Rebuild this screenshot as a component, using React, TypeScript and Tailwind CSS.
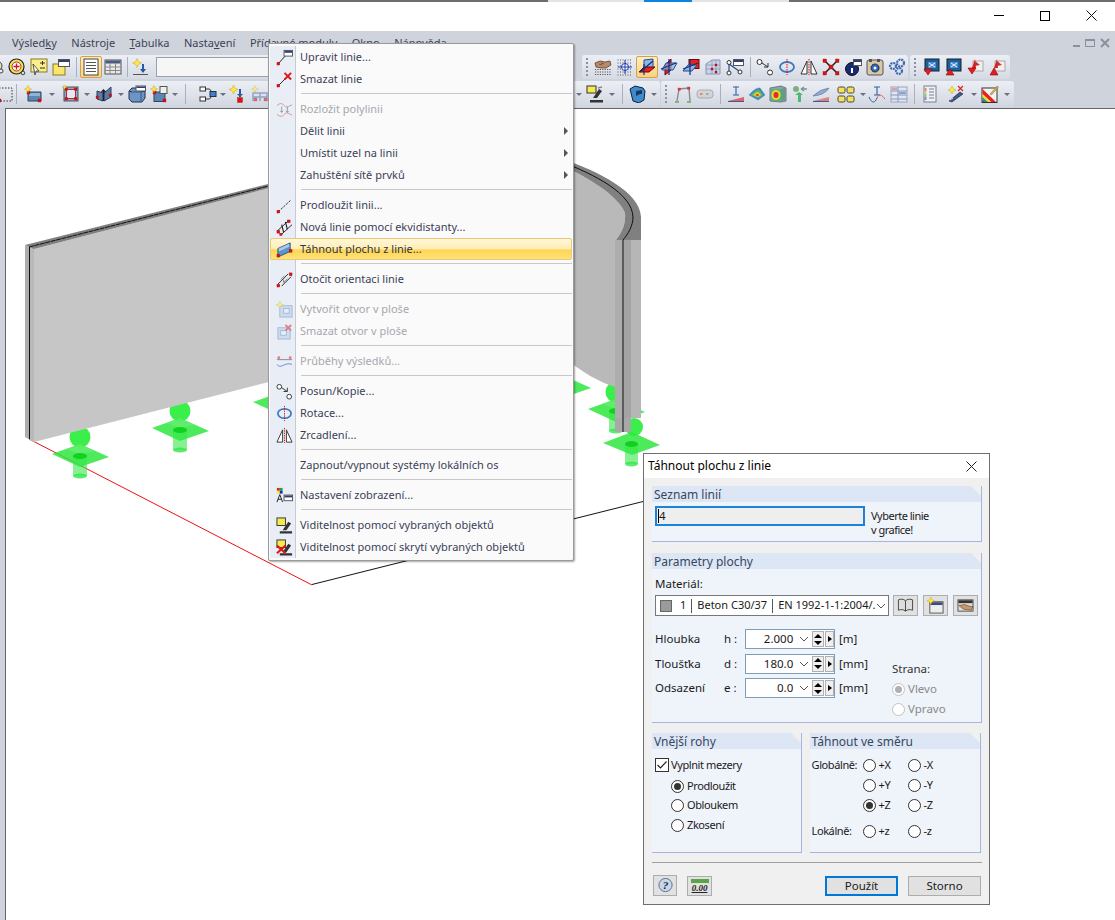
import React from "react";

type P = { children?: React.ReactNode; s?: number; o?: number };
const Svg = ({ children, s = 18, o = 1 }: P) => (
  <svg width={s} height={s} viewBox="0 0 18 18" style={{ opacity: o }} className="shrink-0" fill="none">
    {children}
  </svg>
);
const Rd = ({ x, y, w = 3 }: { x: number; y: number; w?: number }) => <rect x={x} y={y} width={w} height={w} fill="#e01010" stroke="#800" strokeWidth="0.3" />;
const Star = ({ x = 3, y = 3, r = 3.5 }: { x?: number; y?: number; r?: number }) => (
  <polygon points={`${x},${y - r} ${x + r * 0.3},${y - r * 0.3} ${x + r},${y} ${x + r * 0.3},${y + r * 0.3} ${x},${y + r} ${x - r * 0.3},${y + r * 0.3} ${x - r},${y} ${x - r * 0.3},${y - r * 0.3}`} fill="#ffe93a" stroke="#b89a10" strokeWidth="0.4" />
);
const Win = ({ x, y, w = 9, h = 7, f = "#fff" }: { x: number; y: number; w?: number; h?: number; f?: string }) => (
  <g>
    <rect x={x + 0.5} y={y + 0.5} width={w} height={h} fill={f} stroke="#555" />
    <rect x={x + 1} y={y + 1} width={w - 1} height={2} fill="#2c3f78" />
  </g>
);

const I: Record<string, React.ReactNode> = {
  partial: <g><circle cx="9" cy="10" r="5" fill="#e8e2b0" stroke="#444" /><circle cx="13" cy="15" r="2" fill="#eee" stroke="#444" /></g>,
  target: <g><circle cx="8.500" cy="8.500" r="7.500" fill="#f6e14a" stroke="#222" strokeWidth="1.200" /><circle cx="8.500" cy="8.500" r="4.500" fill="#fff" stroke="#a33" /><path d="M5.500 8.500h6M8.500 5.500v6" stroke="#d11" strokeWidth="1.300" /><circle cx="15" cy="15" r="1.800" fill="#ddd" stroke="#444" /></g>,
  cursorStar: <g><rect x="1" y="1" width="16" height="13" fill="#f9ee8a" stroke="#8a7a20" /><path d="M3 6l6 7-3 0-1 4z" fill="#fff" stroke="#333" strokeWidth="0.800" /><path d="M10 5h5M12.500 3v4M10 10h5" stroke="#333" /></g>,
  winYellow: <g><rect x="1" y="6" width="12" height="11" fill="#fbe56a" stroke="#8a7a20" /><Win x={6} y={1} w={11} h={7} /></g>,
  doc: <g><rect x="2" y="1" width="14" height="16" fill="#fff" stroke="#444" /><path d="M4 4.500h10M4 7.500h10M4 10.500h10M4 13.500h10" stroke="#555" /></g>,
  table: <g><rect x="1" y="2" width="16" height="14" fill="#e8e8e8" stroke="#555" /><rect x="1.500" y="2.500" width="15" height="3" fill="#4a5a80" /><path d="M1 9h16M1 12.500h16M6 5v11M11.500 5v11" stroke="#888" /></g>,
  starArrow: <g><Star x={5} y={5} r={4.500} /><path d="M11 6v8" stroke="#2a5a9a" strokeWidth="2" /><path d="M8 11h6l-3 4z" fill="#2a5a9a" /><path d="M1 16.500h15" stroke="#555" /></g>,
  dashed: <g><rect x="2" y="3" width="13" height="13" stroke="#333" strokeDasharray="1.500 1.500" /><Rd x={1} y={14} /></g>,
  starBox: <g><path d="M4 7h13v9H4z" fill="#5b86b8" stroke="#345" /><path d="M5 8h11v3H5z" fill="#8fb4dc" /><Rd x={3} y={6} /><Rd x={14} y={14} /><Star x={4} y={4} r={3.500} /></g>,
  redFrame: <g><rect x="2" y="2" width="14" height="14" fill="#8fa5c4" stroke="#456" /><rect x="4.500" y="4.500" width="9" height="9" fill="#e4e8f0" stroke="#c22" /><Rd x={3} y={3} w={2.500} /><Rd x={12.500} y={3} w={2.500} /><Rd x={3} y={12.500} w={2.500} /><Rd x={12.500} y={12.500} w={2.500} /><Star x={2.500} y={2} r={2.500} /></g>,
  wings: <g><path d="M2 6l6 2v8l-6-2zM16 2l-7 6v8l7-4z" fill="#5a7ca8" stroke="#2c3f60" /><path d="M8.500 5v11M6.500 7l2-2 2 2" stroke="#222" strokeWidth="1.300" /><Rd x={1} y={11} w={2.500} /><Rd x={14} y={9} w={2.500} /></g>,
  cube: <g><path d="M1 6l3-3h9l4 3v7l-3 4H4l-3-3z" fill="#6d94c6" stroke="#234" /><path d="M4 7h9v9" stroke="#3a5a88" /><path d="M4 7L1 6M13 7l4-1" stroke="#234" /><rect x="8" y="1" width="9.500" height="5" fill="#fff" stroke="#555" /><rect x="8.500" y="1.500" width="8.500" height="1.500" fill="#2c3f78" /></g>,
  starBoxes: <g><rect x="4" y="7" width="11" height="9.500" fill="#5b86b8" stroke="#345" /><rect x="10" y="1.500" width="7" height="7" fill="#eee" stroke="#555" /><Rd x={3} y={6} /><Rd x={13} y={14} /><Star x={4} y={4} r={3.500} /></g>,
  nodes: <g><rect x="1" y="2" width="5.500" height="4" fill="#fff" stroke="#333" /><rect x="1" y="12" width="5.500" height="4" fill="#fff" stroke="#333" /><rect x="11" y="6.500" width="6" height="5" fill="#3c82d0" stroke="#234" /><path d="M6.500 4h4l2 2.500M6.500 14h4l2-2.500" stroke="#333" /></g>,
  starRed: <g><Star x={4.500} y={4.500} r={4.500} /><path d="M11 4v8" stroke="#2a5a9a" strokeWidth="2" /><path d="M8 9h6l-3 3z" fill="#2a5a9a" /><Rd x={8.500} y={12.500} w={5} /></g>,
  fadedFrame: <g opacity="0.55"><Star x={4} y={4} /><path d="M2 16V8h14v8M9 8v8M2 12h14" stroke="#5573a8" strokeWidth="1.500" /><Rd x={3} y={13} /><Rd x={13} y={13} /></g>,
  hand: <g><path d="M1 11.500h16M1 14h16M1 16.500h16" stroke="#555" strokeDasharray="1.200 1.200" /><path d="M1 5l5-2 5 1 5-1 1 4-5 3H7L2 9z" fill="#b88a66" stroke="#4a3020" strokeWidth="0.700" /><path d="M5 6l3 1M7 5l3 1" stroke="#4a3020" strokeWidth="0.600" /></g>,
  handWin: <g><rect x="1" y="3" width="16" height="12" fill="#dcdcdc" stroke="#555" /><rect x="1.500" y="3.500" width="15" height="3" fill="#333" /><path d="M2 9l6-1 6 2 3 0-2 4-8-1z" fill="#c7966a" stroke="#5a3a20" strokeWidth="0.600" /></g>,
  gridStar: <g><path d="M1.500 2h15M1.500 5h15M1.500 8h15M1.500 11h15M1.500 14h15M1.500 17h15" stroke="#555" strokeDasharray="1 1.500" /><circle cx="9" cy="9" r="3.500" fill="#fff" stroke="#1c3fae" /><path d="M9 2v14M2 9h14" stroke="#1c3fae" /></g>,
  planeXY: <g><path d="M6 2l9-1v9H6z" fill="#8cb6e6" stroke="#234c9a" /><path d="M1 14l5-5h11l-6 5z" fill="#e52020" stroke="#700" /><path d="M6 6v11M2 14L15 3" stroke="#12307a" strokeWidth="1.200" /></g>,
  planeYZ: <g><path d="M5 7l6-6v11l-6 5z" fill="#e52020" stroke="#700" /><path d="M2 12l4-7h11l-4 7z" fill="#8cb6e6" fillOpacity=".7" stroke="#234c9a" /><path d="M9 1v16M1 11L16 5" stroke="#12307a" strokeWidth="1.200" /></g>,
  planeXZ: <g><rect x="7" y="1.500" width="10" height="9" fill="#e52020" stroke="#700" /><path d="M1 13l5-6h9l-5 6z" fill="#8cb6e6" stroke="#234c9a" /><path d="M8 1v16M1 11L16 5" stroke="#12307a" strokeWidth="1.200" /></g>,
  gridPts: <g><path d="M2 16V6l6-4h8v14z" fill="#c8d2e8" stroke="#8894b0" /><path d="M2 11h14M8 2v14M12 2v14M2 7h14" stroke="#8894b0" strokeWidth="0.700" /><Rd x={7} y={10} w={2} /><Rd x={11} y={6} w={2} /><Rd x={11} y={13} w={2} /></g>,
  editPoly: <g><path d="M3 14V6l10 7" stroke="#2c4a8a" strokeWidth="1.200" /><circle cx="3" cy="4.500" r="2" fill="#fff" stroke="#333" /><circle cx="3" cy="15" r="2" fill="#fff" stroke="#333" /><circle cx="14" cy="14" r="2" fill="#fff" stroke="#333" /><Win x={7} y={1} w={10} h={6} /></g>,
  moveCopy: <g><circle cx="3.500" cy="4" r="2.500" fill="#fff" stroke="#333" /><circle cx="14" cy="14.500" r="2.500" fill="#fff" stroke="#333" /><path d="M6 5l6 4M12 5v4H8" stroke="#333" /></g>,
  rotate: <g><ellipse cx="9" cy="9" rx="7" ry="5" stroke="#3c78c0" strokeWidth="1.800" /><path d="M9 1v16" stroke="#e01010" strokeDasharray="1.500 1" /></g>,
  mirror: <g><path d="M1 16L7 3v13zM17 16L11 3v13z" fill="#fff" stroke="#333" /><path d="M9 1v16" stroke="#d11" strokeDasharray="1.500 1" /></g>,
  xred: <g><path d="M3 3l12 12M15 3L3 15" stroke="#222" strokeWidth="1.500" /><Rd x={1} y={1} w={3.500} /><Rd x={13.500} y={1} w={3.500} /><Rd x={1} y={13.500} w={3.500} /><Rd x={13.500} y={13.500} w={3.500} /><Rd x={7} y={7} w={4} /></g>,
  info: <g><circle cx="8" cy="11" r="6.500" fill="#162a70" stroke="#111" /><path d="M8 7.500v.01" stroke="#fff" strokeWidth="2" /><path d="M8 10v5" stroke="#fff" strokeWidth="2" /><Win x={9} y={1} w={8} h={6} /></g>,
  cog: <g><rect x="1" y="2" width="16" height="15" rx="2" fill="#d8c8a8" stroke="#555" /><rect x="3" y="1" width="3" height="3" fill="#555" /><rect x="11" y="1" width="3" height="3" fill="#555" /><circle cx="9" cy="10" r="4" fill="#3266b8" stroke="#123" strokeDasharray="2 .5" /><circle cx="9" cy="10" r="1.500" fill="#fff" /></g>,
  gears: <g><circle cx="12.500" cy="5" r="3.500" stroke="#3c68b0" strokeWidth="2.200" strokeDasharray="2 .8" /><circle cx="5" cy="8" r="3" stroke="#3c68b0" strokeWidth="2.200" strokeDasharray="2 .8" /><circle cx="11" cy="13" r="3" stroke="#3c68b0" strokeWidth="2.200" strokeDasharray="2 .8" /></g>,
  blueX1: <g><rect x="3" y="1" width="14" height="12" fill="#1d5f96" stroke="#123" /><rect x="6" y="4" width="8" height="6" fill="#4c8ed0" /><path d="M7 5l6 4M13 5L7 9" stroke="#e8f0ff" /><path d="M2 11h8l-4 6z" fill="#e02020" stroke="#900" strokeWidth="0.600" /></g>,
  blueX2: <g><rect x="3" y="1" width="14" height="12" fill="#1d5f96" stroke="#123" /><rect x="6" y="4" width="8" height="6" fill="#4c8ed0" /><path d="M7 5l6 4M13 5L7 9" stroke="#e8f0ff" /><path d="M2 17l4-6 4 6z" fill="#e02020" stroke="#900" strokeWidth="0.600" /></g>,
  redPin1: <g><rect x="7" y="3" width="10" height="10" fill="#f2eeee" stroke="#aaa" /><path d="M9 1l1 9H6z" fill="#d82020" /><path d="M9 3l5 4-5 1z" fill="#c83030" /><path d="M2 10h8l-4 6z" fill="#e02020" stroke="#900" strokeWidth="0.600" /></g>,
  redPin2: <g><rect x="7" y="3" width="10" height="10" fill="#f2eeee" stroke="#aaa" /><path d="M9 1l1 9H6z" fill="#d82020" /><path d="M9 3l5 4-5 1z" fill="#c83030" /><path d="M2 17l4-7 4 7z" fill="#e02020" stroke="#900" strokeWidth="0.600" /></g>,
  micro: <g><rect x="1" y="1" width="9" height="7" fill="#f5ea50" stroke="#333" /><path d="M7 13l6-9 3 2-5 7zM4 15h13v2.500H4z" fill="#333" /><path d="M12 3l4-1" stroke="#888" strokeWidth="1.500" /></g>,
  armchair: <g><path d="M2 4l5-3 8 2 2 3-1 9-5 3-6-2z" fill="#3e8ace" stroke="#123" /><path d="M8 6l6-1 0 4-2 0-4 2z" fill="#1d3a5a" /></g>,
  frame: <g opacity="0.8"><path d="M3 16L5 4l10-1 1 13" stroke="#777" strokeWidth="1.400" /><Rd x={4} y={3} w={2.500} /><Rd x={13.500} y={2} w={2.500} /><path d="M1 17h4M13 17h4" stroke="#3a3" strokeWidth="1.300" /></g>,
  pill: <g opacity="0.6"><rect x="1" y="5" width="16" height="8" rx="3" fill="#ccc" stroke="#888" /><rect x="4" y="8" width="2.500" height="2" fill="#d44" /><rect x="7" y="8" width="2.500" height="2" fill="#dd4" /><rect x="10" y="8" width="2.500" height="2" fill="#49c" /></g>,
  beamRed: <g><path d="M9 2v8M6 2h6M6 10h6" stroke="#3060a0" strokeWidth="1.100" /><path d="M1 16l16-4v4z" fill="#e86060" /><path d="M1 16.500h16" stroke="#3060a0" /></g>,
  dome: <g><path d="M1 10Q8 2 12 3l5 7-7 5z" fill="#3c8ad0" stroke="#668" strokeWidth="0.400" /><path d="M3 10Q8 5 11 5l4 5-5 3z" fill="#58c060" /><path d="M5 10Q8 7 10 7l3 3-3 2z" fill="#e8d030" /><path d="M7 10l3-1 1 1-1 1z" fill="#d82020" /></g>,
  cubeColor: <g><path d="M1 3l11-2 5 2v13l-5 1-11-1z" fill="#8aa0b8" stroke="#778" /><rect x="2" y="4" width="10" height="12" fill="#58b868" /><ellipse cx="7" cy="10" rx="4.500" ry="5" fill="#e8d830" /><ellipse cx="7" cy="10" rx="2.500" ry="3" fill="#d83030" /><path d="M12 4l4-1v12l-4 1z" fill="#5ca080" /></g>,
  greenUp: <g><path d="M8 8h3v9H8zM5 10l4-3 4 3z" fill="#4cb870" /><circle cx="6" cy="4" r="3" fill="#80b080" /><path d="M11 4h6M11 4l3-2M11 4l3 2" stroke="#6c9a88" strokeWidth="1.300" /></g>,
  lens: <g><path d="M1 16l16-4v4z" fill="#e08080" /><path d="M1 11Q8 4 17 3 13 10 1 11z" fill="#8ab0d8" stroke="#557" strokeWidth="0.500" /><path d="M1 16.500h16" stroke="#3060a0" /></g>,
  fourYellow: <g><rect x="1" y="2" width="7" height="6" rx="1.500" fill="#f4e25a" stroke="#444" /><rect x="10" y="2" width="7" height="6" rx="1.500" fill="#f4e25a" stroke="#444" /><rect x="1" y="11" width="7" height="6" rx="1.500" fill="#f4e25a" stroke="#444" /><rect x="10" y="11" width="7" height="6" rx="1.500" fill="#f4e25a" stroke="#444" /></g>,
  beamWave: <g><path d="M9 2v8M6 2h6M6 10h6" stroke="#3060a0" strokeWidth="1.100" /><path d="M9 13c2-5 5-3 8 1" stroke="#d85a5a" /><path d="M1 12c3 7 6 6 8 1" stroke="#3060a0" /></g>,
  tblBlue: <g><rect x="1" y="2" width="16" height="15" fill="#dfe6f4" stroke="#9aa6c0" /><path d="M1 6h16M1 10h16M1 14h16M8 2v15" stroke="#8a98b8" /><rect x="2" y="3" width="5" height="2" fill="#e0a0a0" /><rect x="9" y="7" width="7" height="2" fill="#8aa4d0" /></g>,
  docGrey: <g><rect x="3" y="1" width="12" height="16" fill="#eef0f4" stroke="#7a8090" /><path d="M8 4h5M8 7h5M8 10h5M8 13h5" stroke="#7a8090" /><path d="M4.500 3v3" stroke="#d88" strokeWidth="2" /><path d="M4.500 6v3" stroke="#dc6" strokeWidth="2" /><path d="M4.500 9v3" stroke="#8c8" strokeWidth="2" /><path d="M4.500 12v3" stroke="#88c" strokeWidth="2" /></g>,
  brush: <g><Star x={5} y={5} r={4} /><path d="M2 16L13 7l3 2L5 17z" fill="#3a5a88" stroke="#111" strokeWidth="0.500" /><path d="M11 1l5 5M16 1l-5 5" stroke="#d22" strokeWidth="1.200" /><path d="M3 15l3-2" stroke="#ddd" /></g>,
  colors: <g><rect x="1" y="3" width="15" height="14.500" fill="#f4f4f4" stroke="#333" /><path d="M1.500 4L15 17H10L1.500 9z" fill="#e82020" /><path d="M1.500 9L10 17H7L1.500 12z" fill="#f0e030" /><path d="M1.500 12L7 17H4.500L1.500 14.500z" fill="#30a040" /><path d="M1.500 14.500L4.500 17h-3z" fill="#2850c0" /><path d="M9 9l7-8 1.500 1-7 8z" fill="#e0b040" stroke="#555" strokeWidth="0.400" /></g>,
  editLine: <g><path d="M2.500 15.500L11 6" stroke="#222" /><Rd x={1} y={14} /><rect x="8.500" y="1.500" width="9" height="6" fill="#fff" stroke="#555" /><rect x="9" y="2" width="8" height="2" fill="#2c3f78" /></g>,
  delLine: <g><path d="M2.500 15.500L14 4" stroke="#222" /><Rd x={1} y={14} /><path d="M9 2l7 7M16 2l-7 7" stroke="#dc1818" strokeWidth="2" /></g>,
  decomp: <g opacity="0.55"><path d="M1 5c3-3 5-3 8 0s5 0 8-1M1 14c3 3 5 3 8 0s5 0 8 1" stroke="#c44" /><path d="M6 6v6M4.500 10.500L6 12l1.500-1.500M12 6v6M10.500 10.500L12 12l1.500-1.500" stroke="#555" /></g>,
  extend: <g><path d="M2.500 15.500L16 3" stroke="#222" strokeDasharray="2.500 1.200" /><Rd x={1} y={14} /></g>,
  equid: <g><path d="M1 13L13 2M5 17L17 6" stroke="#222" /><path d="M6 6l2 8M10 3l2 8" stroke="#222" strokeWidth="1.200" /><Rd x={1} y={12} /><Rd x={12} y={1} /><Rd x={4} y={15} w={2.500} /></g>,
  extrude: <g><path d="M2 8L15 2v9L2 17z" fill="#5c93c8" stroke="#2c5a88" /><path d="M3 8l11-5v3L3 11z" fill="#a8cbe8" /><Rd x={1} y={14} /><Rd x={14} y={9} /></g>,
  reverse: <g><path d="M2 14L13 3M6 16L16 6" stroke="#222" /><path d="M5 9l4-4M12 8l-4 4M8 12h3M8 12v-3" stroke="#888" /><Rd x={1} y={14} /><Rd x={14} y={2} /></g>,
  holeStar: <g opacity="0.6"><rect x="4" y="5" width="13" height="12" fill="#b9cfe8" stroke="#7a9ac0" /><rect x="8" y="8" width="6" height="5" fill="#e6eef8" stroke="#7a9ac0" /><Star x={4} y={4} r={4} /></g>,
  holeDel: <g opacity="0.6"><rect x="2" y="5" width="13" height="12" fill="#b9cfe8" stroke="#7a9ac0" /><rect x="5" y="8" width="6" height="5" fill="#e6eef8" stroke="#7a9ac0" /><path d="M10 2l6 6M16 2l-6 6" stroke="#dc3030" strokeWidth="1.800" /></g>,
  diagram: <g opacity="0.65"><path d="M1 7h16" stroke="#555" /><circle cx="3" cy="5" r="1.500" fill="#d44" /><circle cx="15" cy="5" r="1.500" fill="#d44" /><path d="M1 12c4 6 8-3 16 0" stroke="#2e50c0" /></g>,
  display: <g><rect x="1" y="1" width="3" height="3" fill="#d22" /><rect x="4" y="1" width="3" height="3" fill="#2a2" /><rect x="1" y="4" width="3" height="3" fill="#ee2" /><rect x="4" y="4" width="3" height="3" fill="#22c" /><path d="M4 8L1 16M4 8l3 8M2 13h4" stroke="#222" /><rect x="8.500" y="8.500" width="9" height="6" fill="#fff" stroke="#555" /><rect x="9" y="9" width="8" height="2" fill="#2c3f78" /></g>,
  visSel: <g><rect x="1" y="1" width="9" height="8" fill="#f5ea50" stroke="#333" /><path d="M7 14l6-9 3 2-5 7zM4 15h13v2.500H4z" fill="#333" /></g>,
  visHide: <g><rect x="1" y="1" width="9" height="8" fill="#f5ea50" stroke="#333" /><path d="M7 14l6-9 3 2-5 7zM4 15h13v2.500H4z" fill="#333" /><path d="M1 7l9 8M10 7l-9 8" stroke="#e01818" strokeWidth="2.200" /></g>,
  book: <g><path d="M9 4C7 2 4 2 1.500 3v11C4 13 7 13 9 15c2-2 5-2 7.500-1V3C14 2 11 2 9 4z" fill="#ddd" stroke="#444" /><path d="M9 4v11" stroke="#444" /></g>,
  starWin: <g><rect x="3" y="5" width="14" height="12" fill="#eee" stroke="#555" /><rect x="3.500" y="5.500" width="13" height="3" fill="#3c4e80" /><Star x={4} y={4} r={4} /></g>,
  help: <g><circle cx="9" cy="8.500" r="7" fill="#c8d6ec" stroke="#5a6c90" /><text x="9" y="13" fontSize="12" fontWeight="700" fontStyle="italic" textAnchor="middle" fill="#222" fontFamily="Liberation Serif">?</text></g>,
};

const Sep = ({ c = "" }: { c?: string }) => <span className={`mx-auto block h-[20px] w-px bg-[#aab0bc] ${c}`} />;
const Grip = () => (
  <span className="flex h-[20px] w-[10px] shrink-0 flex-col items-center justify-center gap-[2px]">
    {[0, 1, 2, 3, 4].map((k) => <span key={k} className="h-[2px] w-[2px] bg-[#8a92a4]" />)}
  </span>
);
const Drop = ({ c = "w-[10px]" }: { c?: string }) => (
  <span className={`flex shrink-0 items-center justify-center ${c}`}>
    <span className="h-0 w-0 border-x-[3px] border-t-[3px] border-x-transparent border-t-[#6b7080]" />
  </span>
);
const Btn = ({ n, active, c = "w-[22px]", o }: { n: string; active?: boolean; c?: string; o?: number }) => (
  <span className={`flex h-[22px] shrink-0 items-center justify-center rounded-[2px] ${c} ${active ? "border border-[#d2a050] bg-gradient-to-b from-[#fdeec0] to-[#fbd27e]" : ""}`}>
    <Svg o={o}>{I[n]}</Svg>
  </span>
);

const U = ({ c }: { c: string }) => <span className="underline">{c}</span>;

type MI = { t?: string; i?: string; dis?: boolean; sub?: boolean; hot?: boolean };
const menu: MI[] = [
  { t: "Upravit linie...", i: "editLine" }, { t: "Smazat linie", i: "delLine" }, {},
  { t: "Rozložit polylinii", i: "decomp", dis: true }, { t: "Dělit linii", sub: true }, { t: "Umístit uzel na linii", sub: true }, { t: "Zahuštění sítě prvků", sub: true }, {},
  { t: "Prodloužit linii...", i: "extend" }, { t: "Nová linie pomocí ekvidistanty...", i: "equid" }, { t: "Táhnout plochu z linie...", i: "extrude", hot: true }, {},
  { t: "Otočit orientaci linie", i: "reverse" }, {},
  { t: "Vytvořit otvor v ploše", i: "holeStar", dis: true }, { t: "Smazat otvor v ploše", i: "holeDel", dis: true }, {},
  { t: "Průběhy výsledků...", i: "diagram", dis: true }, {},
  { t: "Posun/Kopie...", i: "moveCopy" }, { t: "Rotace...", i: "rotate" }, { t: "Zrcadlení...", i: "mirror" }, {},
  { t: "Zapnout/vypnout systémy lokálních os" }, {},
  { t: "Nastavení zobrazení...", i: "display" }, {},
  { t: "Viditelnost pomocí vybraných objektů", i: "visSel" }, { t: "Viditelnost pomocí skrytí vybraných objektů", i: "visHide" },
];

const Support = ({ x, y }: { x: number; y: number }) => (
  <g>
    <circle cx={x} cy={y - 19} r="10.500" fill="#2fee3f" fillOpacity="0.95" />
    <polygon points={`${x - 28},${y - 2} ${x},${y - 12} ${x + 29},${y + 1} ${x},${y + 11}`} fill="#2ee63e" fillOpacity="0.85" />
    <polygon points={`${x - 14},${y - 7} ${x},${y - 12} ${x + 15},${y - 5} ${x},${y - 2}`} fill="#66f072" fillOpacity="0.7" />
    <rect x={x - 7} y={y} width="14" height="20" fill="#35e84a" fillOpacity="0.6" />
    <ellipse cx={x} cy={y + 20} rx="7" ry="2.500" fill="#35e84a" fillOpacity="0.8" />
    <ellipse cx={x} cy={y} rx="7" ry="3" fill="#10d020" />
  </g>
);

const Model = () => (
  <svg className="absolute left-0 top-0 h-full w-full" viewBox="6 109 1109 811" preserveAspectRatio="none">
    <path d="M29 439L312 585" stroke="#f01010" strokeWidth="1" />
    <path d="M312 584.500L645 501" stroke="#111" strokeWidth="1" />
    <Support x={80} y={456} />
    <Support x={180} y={430} />
    <Support x={281} y={404} />
    <Support x={562} y={387} />
    <Support x={616} y={411} />
    <polygon points="34,249 300,180 300,374 34,442" fill="#c6c6c6" />
    <polygon points="25,245 34,249 34,442 25,437" fill="#adadad" />
    <rect x="30" y="247" width="4" height="194" fill="#b9b9b9" />
    <polygon points="25,245 300,176 300,180 34,249" fill="#808080" />
    <path d="M29 247L300 178" stroke="#111" strokeWidth="1" strokeDasharray="5 0.600" />
    <path d="M29.500 247V439" stroke="#111" strokeWidth="1" />
    <path d="M560 165C590 178 618 196 625 213C626 224 622 232 616 240V387C600 383 582 372 560 355z" fill="#b9b9b9" />
    <path d="M560 158C600 172 640 192 641 217V241L616 240C622 232 626 224 625 213C618 196 590 178 560 165z" fill="#808080" />
    <path d="M560 161C595 175 632 193 633 217C633 226 628 234 623 240" stroke="#111" strokeWidth="1" fill="none" />
    <rect x="615" y="240" width="8" height="192" fill="#adadad" />
    <rect x="623" y="240" width="8" height="192" fill="#a3a3a3" />
    <rect x="631" y="240" width="10" height="178" fill="#b6b6b6" />
    <rect x="622" y="240" width="2" height="192" fill="#5c5c5c" />
    <circle cx="634" cy="427" r="9" fill="#2fee3f" fillOpacity="0.95" />
    <rect x="615" y="418" width="16" height="14" fill="#a8a8a8" />
    <rect x="622" y="418" width="2" height="14" fill="#5c5c5c" />
    <polygon points="603,443 632,432 660,445 632,455" fill="#2ee63e" fillOpacity="0.85" />
    <rect x="625" y="443" width="13" height="21" fill="#35e84a" fillOpacity="0.6" />
    <ellipse cx="631.500" cy="444" rx="6.500" ry="3" fill="#10d020" />
    <ellipse cx="631.500" cy="464" rx="6.500" ry="2.500" fill="#35e84a" fillOpacity="0.8" />
  </svg>
);

const Group = ({ title, c, children }: { title: string; c: string; children: React.ReactNode }) => (
  <section className={`flex flex-col border-b border-r border-[#a9b4de] bg-[#eff3fa] ${c}`}>
    <div className="relative h-[16px] shrink-0 bg-[#dce6f5] pl-[2px] text-[12px] leading-[17px] tracking-normal text-[#39475e]">
      {title}
      <span className="absolute right-0 top-0 h-0 w-0 [border-left:10px_solid_transparent] [border-top:10px_solid_#f0f0f0]" />
    </div>
    {children}
  </section>
);

const Radio = ({ on, dis }: { on?: boolean; dis?: boolean }) => (
  <span className={`flex h-[13px] w-[13px] shrink-0 items-center justify-center rounded-full border bg-white ${dis ? "border-[#c2c2c2]" : "border-[#333]"}`}>
    {on && <span className={`h-[7px] w-[7px] rounded-full ${dis ? "bg-[#b0b0b0]" : "bg-[#333]"}`} />}
  </span>
);
const RL = ({ l, on, dis, c = "" }: { l: string; on?: boolean; dis?: boolean; c?: string }) => (
  <span className={`flex items-center gap-[3px] ${dis ? "text-[#8a8a8a]" : ""} ${c}`}>
    <Radio on={on} dis={dis} />
    {l}
  </span>
);
const Chev = () => (
  <svg width="10" height="6" viewBox="0 0 10 6" fill="none" className="shrink-0"><path d="M1 1l4 4 4-4" stroke="#555" /></svg>
);
const Spin = ({ v }: { v: string }) => (
  <div className="flex h-[20px] w-[90px] items-center border border-[#7f9db9] bg-white pl-[2px]">
    <span className="w-[46px] text-right">{v}</span>
    <span className="ml-[6px]"><Chev /></span>
    <span className="ml-[3px] flex h-[16px] w-[12px] flex-col items-center justify-around border border-[#b0b0b0] bg-[#efefef]">
      <span className="h-0 w-0 border-x-[4px] border-b-[4px] border-x-transparent border-b-black" />
      <span className="h-0 w-0 border-x-[4px] border-t-[4px] border-x-transparent border-t-black" />
    </span>
    <span className="ml-px flex h-[16px] w-[9px] items-center justify-center border border-[#b0b0b0] bg-[#efefef]">
      <span className="h-0 w-0 border-y-[3px] border-l-[4px] border-y-transparent border-l-black" />
    </span>
  </div>
);
const Row = ({ a, b, u, v }: { a: string; b: string; u: string; v: string }) => (
  <div className="flex items-center">
    <span className="w-[69px]">{a}</span>
    <span className="w-[21px]">{b}</span>
    <Spin v={v} />
    <span className="ml-[4px]">{u}</span>
  </div>
);
const IconBtn = ({ n, c = "" }: { n: string; c?: string }) => (
  <span className={`flex h-[21px] items-center justify-center border border-[#adadad] bg-[#e1e1e1] ${c}`}>
    <Svg s={17}>{I[n]}</Svg>
  </span>
);

export default function App() {
  return (
    <div className="flex h-[920px] w-[1115px] flex-col overflow-hidden bg-white font-['Noto_Sans','Liberation_Sans',sans-serif] text-[12px] text-[#1a1a1a]">
      <div className="flex h-[2px] shrink-0">
        <span className="w-[548px] bg-[#6d6d6d]" />
        <span className="w-[96px] bg-[#e4e4e4]" />
        <span className="w-[48px] bg-[#0a84e0]" />
        <span className="w-[97px] bg-[#e4e4e4]" />
        <span className="flex-1 bg-[#6d6d6d]" />
      </div>
      <div className="flex h-[29px] shrink-0 items-center justify-end pb-[2px] pr-[1px]">
        <span className="flex w-[46px] justify-center"><span className="h-px w-[10px] bg-black" /></span>
        <span className="flex w-[46px] justify-center"><span className="h-[10px] w-[10px] border border-black" /></span>
        <span className="flex w-[46px] justify-center">
          <svg width="11" height="11" viewBox="0 0 11 11"><path d="M.5.5l10 10M10.500.5l-10 10" stroke="#111" /></svg>
        </span>
      </div>
      <div className="flex h-[24px] shrink-0 items-center justify-between bg-[#cfd3dc] pl-[12px] pr-[5px] text-[11px] text-[#3b4256]">
        <div className="flex gap-[14.500px]">
          <span>Výsled<U c="k" />y</span>
          <span>Nástro<U c="j" />e</span>
          <span><U c="T" />abulka</span>
          <span>Nasta<U c="v" />ení</span>
          <span>Přídavné moduly</span>
          <span>Okno</span>
          <span>Nápověda</span>
        </div>
        <div className="flex items-center gap-[5px] text-[#8a90a0]">
          <span className="mt-[6px] h-[2px] w-[7px] bg-[#8a90a0]" />
          <span className="h-[8px] w-[10px] border border-t-2 border-[#8a90a0]" />
          <svg width="10" height="10" viewBox="0 0 10 10"><path d="M1 1l8 8M9 1L1 9" stroke="#8a90a0" strokeWidth="2" /></svg>
        </div>
      </div>
      <div className="h-[53px] shrink-0 bg-[#cfd3dc]">
        <div className="flex h-[26px] items-start">
          <div className="flex h-[24px] w-[574px] items-center overflow-hidden rounded-r-[3px] bg-gradient-to-b from-[#eceff5] to-[#d6dae4]">
            <span className="flex h-[22px] w-[6px] shrink-0 justify-end overflow-hidden"><Svg>{I.partial}</Svg></span>
            <Btn n="target" /><Btn n="cursorStar" /><Btn n="winYellow" />
            <span className="w-[8px]"><Sep /></span>
            <Btn n="doc" active /><Btn n="table" />
            <span className="w-[6px]"><Sep /></span>
            <Btn n="starArrow" />
            <span className="ml-[4px] h-[20px] flex-1 border border-[#9aa0ac] bg-[#f6f6f6]" />
          </div>
          <div className="ml-[8px] flex h-[24px] items-center rounded-[3px] bg-gradient-to-b from-[#eceff5] to-[#d6dae4]">
            <Grip />
            <Btn n="hand" /><Btn n="gridStar" /><Btn n="planeXY" active /><Btn n="planeYZ" /><Btn n="planeXZ" /><Btn n="gridPts" /><Btn n="editPoly" />
            <span className="w-[8px]"><Sep /></span>
            <Btn n="moveCopy" /><Btn n="rotate" /><Btn n="mirror" /><Btn n="xred" /><Btn n="info" /><Btn n="cog" /><Btn n="gears" />
          </div>
          <div className="ml-[2px] flex h-[24px] items-center rounded-[3px] bg-gradient-to-b from-[#eceff5] to-[#d6dae4] pr-[2px]">
            <Grip />
            <Btn n="blueX1" /><Btn n="blueX2" /><Btn n="redPin1" /><Btn n="redPin2" />
          </div>
        </div>
        <div className="flex h-[26px] items-start">
          <div className="flex h-[26px] w-[660px] items-center rounded-r-[3px] bg-gradient-to-b from-[#eceff5] to-[#d2d6e0]">
            <Btn n="dashed" c="w-[12px]" />
            <span className="w-[10px]"><Sep /></span>
            <Btn n="starBox" /><Drop c="w-[16px]" />
            <Btn n="redFrame" /><Drop />
            <span className="w-[2px]" />
            <Btn n="wings" /><Drop c="w-[11px]" />
            <Btn n="cube" />
            <Btn n="starBoxes" /><Drop />
            <span className="w-[10px]"><Sep /></span>
            <Btn n="nodes" c="ml-[6px] w-[23px]" /><Drop c="w-[8px]" />
            <Btn n="starRed" /><Btn n="fadedFrame" />
            <span className="w-[318px]" />
            <Drop />
            <Btn n="micro" /><Drop c="w-[12px]" />
            <span className="w-[8px]"><Sep /></span>
            <Btn n="armchair" /><Drop c="w-[12px]" />
          </div>
          <div className="ml-[1px] flex h-[26px] items-center rounded-[3px] bg-gradient-to-b from-[#eceff5] to-[#d2d6e0] pr-[2px]">
            <Grip />
            <Btn n="frame" c="ml-[1px] w-[22px]" /><Btn n="pill" />
            <span className="w-[9px]"><Sep /></span>
            <Btn n="beamRed" c="w-[21px]" /><Btn n="dome" c="w-[21px]" /><Btn n="cubeColor" c="w-[21px]" /><Btn n="greenUp" c="w-[21px]" /><Btn n="lens" c="w-[23px]" />
            <Btn n="fourYellow" c="w-[27px]" /><Drop c="w-[7px]" />
            <Btn n="beamWave" /><Btn n="tblBlue" />
            <span className="w-[9px]"><Sep /></span>
            <Btn n="docGrey" /><Btn n="brush" c="ml-[2px] w-[26px]" /><Drop c="w-[9px]" />
            <Btn n="colors" c="w-[24px]" /><Drop />
          </div>
        </div>
      </div>
      <div className="flex min-h-0 flex-1 bg-[#cfd3dc] pl-[5px]">
        <div className="relative flex-1 border-l border-t border-[#666] bg-white">
          <Model />
        </div>
      </div>

      <div className="absolute left-[268px] top-[43px] flex h-[518px] w-[306px] rounded-[2px] border border-[#9a9a9a] bg-[#fafafa] px-px py-[2px] text-[11px] text-[#3a3f58] shadow-[1px_1px_2px_rgba(0,0,0,0.35)]">
        <div className="absolute bottom-[2px] left-px top-[2px] w-[26px] border-r border-[#c5cad6] bg-[#e9eef6]" />
        <div className="relative flex w-full flex-col">
          {menu.map((m, k) =>
            m.t ? (
              <div key={k} className={`flex h-[22px] shrink-0 items-center ${m.dis ? "text-[#a6a8ae]" : ""} ${m.hot ? "rounded-[2px] border border-[#e6c97a] bg-[linear-gradient(#fff7d8_0%,#ffedb4_50%,#ffd54f_54%,#ffe27a_100%)] text-[#2f3348]" : "border border-transparent"}`}>
                <span className="flex w-[26px] shrink-0 justify-center">{m.i && <Svg s={17}>{I[m.i]}</Svg>}</span>
                <span className="ml-[3px] flex-1 whitespace-nowrap">{m.t}</span>
                {m.sub && <span className="mr-[3px] h-0 w-0 border-y-[4px] border-l-[4px] border-y-transparent border-l-[#555]" />}
              </div>
            ) : (
              <div key={k} className="flex h-[8px] shrink-0 items-start pl-[31px] pt-[3px]"><span className="h-px flex-1 bg-[#c8c8c8]" /></div>
            )
          )}
        </div>
      </div>

      <div className="absolute left-[643px] top-[453px] flex h-[452px] w-[347px] flex-col border border-[#6f6f6f] bg-[#f0f0f0] text-[11.5px] text-[#1a1a1a]">
        <div className="flex h-[24px] shrink-0 items-center justify-between bg-white pl-[4px] pr-[12px] text-[12px] text-black">
          <span>Táhnout plochu z linie</span>
          <svg width="11" height="11" viewBox="0 0 11 11"><path d="M.5.500l10 10M10.500.500l-10 10" stroke="#222" /></svg>
        </div>
        <div className="flex flex-1 flex-col px-[8px] pt-[8px]">
          <Group title="Seznam linií" c="h-[56px] w-[330px]">
            <div className="flex items-start pl-[3px] pt-[4px]">
              <div className="flex h-[20px] w-[210px] items-center border-2 border-[#1c84d8] bg-[#eeeeee] pl-[1px]"><span className="h-[14px] w-px bg-black" />4</div>
              <div className="ml-[6px] pt-[3px] text-[11px] leading-[14px] tracking-[-0.5px]">Vyberte linie<br />v grafice!</div>
            </div>
          </Group>
          <Group title="Parametry plochy" c="mt-[11px] h-[170px] w-[330px]">
            <div className="px-[3px] pt-[7px] leading-[16px]">Materiál:</div>
            <div className="mt-[3px] flex gap-[4px] pl-[3px]">
              <div className="flex h-[21px] w-[234px] items-center border border-[#777] bg-white pl-[4px] text-[11px]">
                <span className="h-[12px] w-[12px] border border-[#666] bg-[#9a9a9a]" />
                <span className="ml-[8px]">1</span>
                <span className="mx-[5px] h-[14px] w-px bg-[#555]" />
                <span className="whitespace-nowrap">Beton C30/37</span>
                <span className="mx-[5px] h-[14px] w-px bg-[#555]" />
                <span className="whitespace-nowrap">EN 1992-1-1:2004/.</span>
                <span className="ml-auto mr-[2px]"><Chev /></span>
              </div>
              <IconBtn n="book" c="w-[25px]" />
              <IconBtn n="starWin" c="ml-[1px] w-[25px]" />
              <IconBtn n="handWin" c="ml-[1px] w-[25px]" />
            </div>
            <div className="flex">
              <div className="mt-[13px] flex w-[240px] flex-col gap-[4.500px] pl-[3px]">
                <Row a="Hloubka" b="h :" v="2.000" u="[m]" />
                <Row a="Tloušťka" b="d :" v="180.0" u="[mm]" />
                <Row a="Odsazení" b="e :" v="0.0" u="[mm]" />
              </div>
              <div className="mt-[46px] flex flex-col gap-[6px] leading-[14px]">
                <span className="text-[#333]">Strana:</span>
                <RL l="Vlevo" on dis />
                <RL l="Vpravo" dis />
              </div>
            </div>
          </Group>
          <div className="mt-[10px] flex gap-[8px] text-[11px] tracking-[-0.4px]">
            <Group title="Vnější rohy" c="h-[120px] w-[150px]">
              <div className="flex flex-col pl-[3px] pt-[9px] leading-[14px]">
                <span className="flex items-center gap-[2px]">
                  <span className="flex h-[14px] w-[14px] items-center justify-center border border-[#333] bg-white">
                    <svg width="10" height="8" viewBox="0 0 10 8"><path d="M.5 4l3 3 6-6.500" stroke="#222" strokeWidth="1.200" fill="none" /></svg>
                  </span>
                  Vyplnit mezery
                </span>
                <RL l="Prodloužit" on c="ml-[16px] mt-[7px]" />
                <RL l="Obloukem" c="ml-[16px] mt-[5px]" />
                <RL l="Zkosení" c="ml-[16px] mt-[6px]" />
              </div>
            </Group>
            <Group title="Táhnout ve směru" c="h-[120px] w-[172px]">
              <div className="grid grid-cols-[51px_45px_auto] items-center gap-y-[6px] pl-[2px] pt-[9px] leading-[14px]">
                <span>Globálně:</span><RL l="+X" /><RL l="-X" />
                <span /><RL l="+Y" /><RL l="-Y" />
                <span /><RL l="+Z" on /><RL l="-Z" />
                <span className="mt-[6px]">Lokálně:</span><RL l="+z" c="mt-[6px]" /><RL l="-z" c="mt-[6px]" />
              </div>
            </Group>
          </div>
          <div className="mt-[9px] h-px w-[330px] bg-[#a0a0a0]" />
          <div className="mt-[12px] flex w-[329px] items-center pl-px">
            <IconBtn n="help" c="h-[20px] w-[24px]" />
            <span className="ml-[10px] flex h-[20px] w-[25px] flex-col items-center justify-center border border-[#adadad] bg-[#e1e1e1] font-['Liberation_Serif',serif] text-[9px] font-bold italic leading-[9px] text-[#222]">
              <span className="mb-px h-[4px] w-[18px] bg-[#5aa548]" />
              <span className="underline">0.00</span>
            </span>
            <span className="ml-auto flex h-[20px] w-[73px] items-center justify-center border-2 border-[#0078d7] bg-[#e1e1e1]">Použít</span>
            <span className="ml-[10px] flex h-[20px] w-[73px] items-center justify-center border border-[#adadad] bg-[#e1e1e1]">Storno</span>
          </div>
        </div>
      </div>
    </div>
  );
}
